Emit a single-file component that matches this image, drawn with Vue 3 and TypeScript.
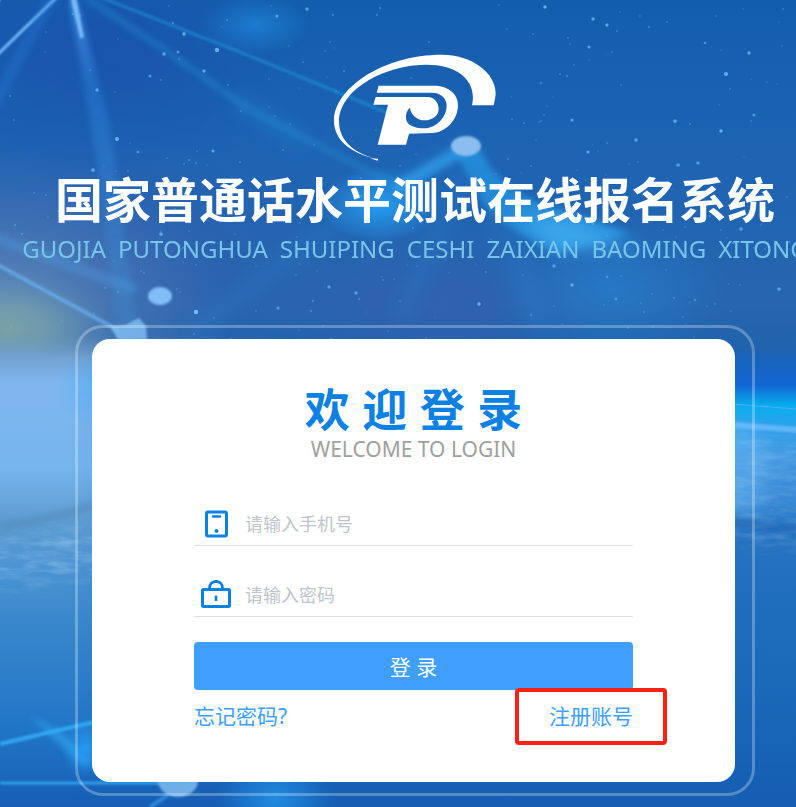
<script setup lang="ts">
import { ref } from 'vue'

interface Star {
  x: number
  y: number
  r: number
  o: number
}

const phone = ref('')
const password = ref('')

const pinyin: string[] = ['GUOJIA', 'PUTONGHUA', 'SHUIPING', 'CESHI', 'ZAIXIAN', 'BAOMING', 'XITONG']

const brightStars: Star[] = [
  [97, 90, 2, 0.7], [117, 139, 2.4, 0.8], [93, 170, 2.2, 0.7], [184, 34, 2, 0.8], [217, 50, 2.6, 0.8],
  [164, 54, 2, 0.7], [178, 52, 1.8, 0.6], [204, 71, 2, 0.7], [150, 76, 1.8, 0.6], [213, 151, 1.8, 0.7],
  [138, 152, 1.6, 0.6], [161, 234, 2.2, 0.7], [196, 312, 2.6, 0.9], [329, 287, 2, 0.6], [356, 293, 2, 0.6],
  [278, 308, 1.8, 0.6], [307, 9, 2, 0.7], [277, 16, 1.8, 0.7], [545, 7, 2, 0.8], [593, 19, 2, 0.7],
  [607, 25, 2, 0.7], [589, 47, 1.8, 0.7], [705, 43, 1.6, 0.5], [749, 53, 2, 0.7], [726, 74, 2.4, 0.8],
  [675, 121, 2.2, 0.7], [721, 131, 2, 0.8], [636, 140, 2, 0.7], [588, 152, 1.8, 0.7], [678, 165, 2.2, 0.6],
  [698, 163, 2, 0.6], [572, 120, 1.8, 0.7], [754, 115, 1.8, 0.6], [741, 229, 2.2, 0.6], [779, 289, 2, 0.7],
  [554, 266, 2, 0.6], [572, 285, 2, 0.7], [479, 304, 2, 0.8], [616, 299, 1.8, 0.5], [607, 277, 1.6, 0.5],
].map(([x, y, r, o]) => ({ x, y, r: r * 0.85, o }))

function scatter(count: number): Star[] {
  let seed = 4217
  const next = (): number => {
    seed = (seed * 16807) % 2147483647
    return seed / 2147483647
  }
  return Array.from({ length: count }, () => ({
    x: Math.round(next() * 796),
    y: Math.round(next() * 345),
    r: 0.7 + next() * 0.6,
    o: 0.15 + next() * 0.25,
  }))
}

const stars: Star[] = [...scatter(240), ...brightStars]
</script>

<template>
  <main class="page">
    <svg class="sky" viewBox="0 0 796 807" preserveAspectRatio="xMidYMid slice" aria-hidden="true">
      <defs>
        <linearGradient id="base" x1="0" y1="0" x2="0" y2="1">
          <stop offset="0" stop-color="#125ead" />
          <stop offset="0.2" stop-color="#1e64b3" />
          <stop offset="0.38" stop-color="#2765ae" />
          <stop offset="0.44" stop-color="#1f62ad" />
          <stop offset="0.6" stop-color="#2a78c6" />
          <stop offset="0.8" stop-color="#1c6cbb" />
          <stop offset="1" stop-color="#155eb3" />
        </linearGradient>
        <linearGradient id="ocean" x1="0" y1="0" x2="0" y2="1">
          <stop offset="0" stop-color="#6f9dc0" stop-opacity="0" />
          <stop offset="0.05" stop-color="#73a3d2" />
          <stop offset="0.1" stop-color="#7fb6f0" />
          <stop offset="0.28" stop-color="#76b5ee" />
          <stop offset="0.39" stop-color="#5f9dd2" />
          <stop offset="0.5" stop-color="#4a93d2" />
          <stop offset="0.6" stop-color="#3a88cb" />
          <stop offset="0.82" stop-color="#2277c8" />
          <stop offset="1" stop-color="#165eb5" />
        </linearGradient>
        <linearGradient id="oceanFade" x1="0" y1="0" x2="1" y2="0">
          <stop offset="0.22" stop-color="#fff" />
          <stop offset="1" stop-color="#000" />
        </linearGradient>
        <mask id="oceanMask">
          <rect y="325" width="320" height="482" fill="url(#oceanFade)" />
        </mask>
        <linearGradient id="horizon" x1="0" y1="0" x2="0" y2="1">
          <stop offset="0" stop-color="#0a64d4" stop-opacity="0" />
          <stop offset="0.13" stop-color="#1266d2" />
          <stop offset="0.2" stop-color="#07aeee" />
          <stop offset="0.27" stop-color="#2fa0ea" />
          <stop offset="0.38" stop-color="#4296e0" />
          <stop offset="0.52" stop-color="#3585d2" />
          <stop offset="0.64" stop-color="#2673c0" />
          <stop offset="1" stop-color="#1967b6" stop-opacity="0" />
        </linearGradient>
        <radialGradient id="glow">
          <stop offset="0" stop-color="#27a9ff" />
          <stop offset="1" stop-color="#27a9ff" stop-opacity="0" />
        </radialGradient>
        <radialGradient id="violet">
          <stop offset="0" stop-color="#3c5eae" stop-opacity="0.8" />
          <stop offset="1" stop-color="#3c5eae" stop-opacity="0" />
        </radialGradient>
        <radialGradient id="indigo">
          <stop offset="0" stop-color="#1b50ad" stop-opacity="0.75" />
          <stop offset="1" stop-color="#1b50ad" stop-opacity="0" />
        </radialGradient>
        <radialGradient id="haze">
          <stop offset="0" stop-color="#6f96b8" stop-opacity="0.85" />
          <stop offset="1" stop-color="#4f80b8" stop-opacity="0" />
        </radialGradient>
        <radialGradient id="dawn">
          <stop offset="0" stop-color="#7aa2a6" stop-opacity="0.95" />
          <stop offset="0.4" stop-color="#769fac" stop-opacity="0.75" />
          <stop offset="1" stop-color="#5c8cb8" stop-opacity="0" />
        </radialGradient>
        <linearGradient id="ray" x1="0" y1="0" x2="0" y2="1">
          <stop offset="0" stop-color="#4c9ff0" />
          <stop offset="0.25" stop-color="#2b80da" stop-opacity="0.7" />
          <stop offset="1" stop-color="#419be0" stop-opacity="0.3" />
        </linearGradient>
        <filter id="soft1" filterUnits="userSpaceOnUse" x="-20" y="-20" width="836" height="847"><feGaussianBlur stdDeviation="1" /></filter>
        <filter id="soft3" filterUnits="userSpaceOnUse" x="-20" y="-20" width="836" height="847"><feGaussianBlur stdDeviation="3" /></filter>
        <filter id="soft9" filterUnits="userSpaceOnUse" x="-40" y="-40" width="876" height="887"><feGaussianBlur stdDeviation="9" /></filter>
        <filter id="ripple" filterUnits="userSpaceOnUse" x="0" y="380" width="796" height="240">
          <feTurbulence type="fractalNoise" baseFrequency="0.04 0.15" numOctaves="3" seed="8" />
          <feColorMatrix values="0 0 0 0 0.5  0 0 0 0 0.75  0 0 0 0 1  2 0 0 0 -0.75" result="waves" />
          <feGaussianBlur in="SourceGraphic" stdDeviation="7" result="area" />
          <feComposite in="waves" in2="area" operator="in" />
        </filter>
      </defs>

      <rect width="796" height="807" fill="url(#base)" />
      <ellipse cx="100" cy="50" rx="210" ry="130" fill="url(#indigo)" />
      <ellipse cx="80" cy="260" rx="260" ry="130" fill="url(#violet)" opacity="0.7" />
      <ellipse cx="0" cy="320" rx="230" ry="170" fill="url(#haze)" />
      <ellipse cx="430" cy="305" rx="170" ry="80" fill="url(#violet)" opacity="0.6" />
      <ellipse cx="255" cy="25" rx="55" ry="30" fill="url(#glow)" opacity="0.4" />
      <ellipse cx="380" cy="205" rx="60" ry="38" fill="url(#glow)" opacity="0.85" />
      <ellipse cx="610" cy="290" rx="120" ry="70" fill="url(#glow)" opacity="0.28" />
      <ellipse cx="8" cy="330" rx="105" ry="60" fill="url(#dawn)" />
      <rect y="335" width="320" height="472" fill="url(#ocean)" mask="url(#oceanMask)" />
      <ellipse cx="95" cy="388" rx="40" ry="40" fill="url(#glow)" opacity="0.3" />
      <path d="M640 345 L796 355 V650 H640Z" fill="url(#horizon)" />
      <ellipse cx="735" cy="470" rx="34" ry="48" fill="#6bb9f2" opacity="0.45" filter="url(#soft9)" />

      <g filter="url(#ripple)" opacity="0.32">
        <path d="M-20 545 Q50 525 120 515 V572 L-20 595Z" fill="#fff" />
        <path d="M700 430 L816 440 V555 L700 540Z" fill="#fff" opacity="0.7" />
      </g>
      <path d="M0 527 Q50 520 95 505" stroke="#4d86b4" stroke-width="9" fill="none" opacity="0.45" filter="url(#soft3)" />
      <path d="M720 520 L796 530" stroke="#1c62ae" stroke-width="10" opacity="0.5" filter="url(#soft3)" />
      <path d="M720 403 L796 409" stroke="#6bb0e8" stroke-width="1" opacity="0.7" />
      <path d="M720 424 L800 430" stroke="#7bc2ff" stroke-width="6" opacity="0.65" filter="url(#soft1)" />

      <g fill="none" stroke-linecap="round">
        <path d="M58 -4 L-4 56" stroke="#77bdff" stroke-width="3" filter="url(#soft1)" />
        <path d="M50 0 L-4 100" stroke="#2b80df" stroke-width="12" opacity="0.3" filter="url(#soft3)" />
        <path d="M100 -3 L250 56 L400 118" stroke="#249ce0" stroke-width="3" opacity="0.5" filter="url(#soft1)" />
        <path d="M85 -3 L165 50 L250 110 L405 190" stroke="#2790d2" stroke-width="5" opacity="0.5" filter="url(#soft3)" />
        <path d="M240 100 L300 140" stroke="#2790d2" stroke-width="16" opacity="0.3" filter="url(#soft9)" />
        <path d="M-4 264 L118 330" stroke="#66b3f5" stroke-width="4" opacity="0.7" filter="url(#soft1)" />
        <path d="M-4 238 L132 288" stroke="#519be0" stroke-width="10" opacity="0.4" filter="url(#soft3)" />
        <path d="M460 148 L395 185 L300 250 L195 330" stroke="#268bd9" stroke-width="14" opacity="0.25" filter="url(#soft9)" />
        <path d="M462 150 L399 187" stroke="#31a6f2" stroke-width="13" opacity="0.65" filter="url(#soft3)" />
      </g>
      <path d="M69 0 H77 L111 130 L137 330 H118 L96 155Z" fill="url(#ray)" opacity="0.7" filter="url(#soft3)" />
      <path d="M70 -4 H76 L84 38 L80 38Z" fill="#8acaff" opacity="0.8" filter="url(#soft1)" />
      <path d="M455 152 Q465 140 482 151 Q494 184 540 203 L630 233 L560 254 Q510 232 485 205Z" fill="#28a2ee" opacity="0.6" filter="url(#soft3)" />
      <path d="M515 218 L565 217 L640 247 L555 249Z" fill="#48b9fa" opacity="0.65" filter="url(#soft9)" />
      <path d="M466 165 L400 320 M490 195 L540 325" stroke="#278ee0" stroke-width="18" opacity="0.2" filter="url(#soft9)" />

      <circle v-for="(star, index) in stars" :key="index" :cx="star.x" :cy="star.y" :r="star.r" :opacity="star.o" fill="#72c4ff" />

      <ellipse cx="466" cy="146" rx="15" ry="10" fill="#8bbdf0" filter="url(#soft1)" />
      <ellipse cx="160" cy="296" rx="12" ry="9" fill="#83bdf7" filter="url(#soft1)" />
      <path d="M110 326 L125 325 L139 318 L146 326 L147 340 H118Z" fill="#7fbbf2" opacity="0.85" filter="url(#soft1)" />
      <path d="M0 744 L55 731 L95 722" stroke="#31a6f2" stroke-width="4" fill="none" filter="url(#soft1)" />
      <path d="M30 716 L60 731 L95 765 H82Z" fill="#34b4fb" opacity="0.5" filter="url(#soft3)" />
      <ellipse cx="86" cy="748" rx="26" ry="30" fill="url(#glow)" opacity="0.7" />
      <path d="M0 783 H170" stroke="#36b4fb" stroke-width="3" opacity="0.75" filter="url(#soft1)" />
      <path d="M150 807 L168 795" stroke="#36a4f0" stroke-width="4" opacity="0.6" filter="url(#soft1)" />
      <ellipse cx="275" cy="800" rx="58" ry="45" fill="url(#glow)" opacity="0.6" />
      <ellipse cx="178" cy="781" rx="20" ry="16" fill="#70aee8" filter="url(#soft1)" />
    </svg>

    <header class="brand">
      <svg class="logo" viewBox="39 42 492 321" role="img" aria-label="国家普通话水平测试">
        <path fill="#fff" d="M175 357C102 343 42 306 42 242C42 145 190 44 365 44C465 44 540 110 525 176L521 196H456C473 120 410 72 315 74C190 76 57 150 57 246C57 305 110 345 175 357L172 362L150 354Z" />
        <path fill="#fff" d="M176 137H350C389 140 414 165 414 195C414 240 375 279 335 279L267 281L258 314H173L204 194H160L167 171H325C345 173 356 190 356 207C356 228 336 241 314 241C292 241 272 225 270 203C256 215 255 235 262 247C270 260 290 265 310 265C350 265 380 230 380 197C380 172 360 158 335 158H170Z" />
      </svg>
      <h1 class="title">国家普通话水平测试在线报名系统</h1>
      <p class="pinyin">
        <span v-for="word in pinyin" :key="word">{{ word }}</span>
      </p>
    </header>

    <section class="frame">
      <form class="card" @submit.prevent>
        <h2 class="welcome">欢 迎 登 录</h2>
        <p class="welcome-en">WELCOME TO LOGIN</p>

        <div class="fields">
          <div class="field">
            <label class="icon" for="phone" aria-label="手机号">
              <svg width="30" height="30" viewBox="0 0 30 30" fill="none" stroke="#0d80e4">
                <rect x="5.500" y="3" width="20" height="24" rx="1.500" stroke-width="3" />
                <path d="M12 7.500H19" stroke-width="2.400" stroke-linecap="round" />
                <circle cx="15.500" cy="22" r="2" fill="#0d80e4" stroke="none" />
              </svg>
            </label>
            <input id="phone" v-model="phone" type="tel" placeholder="请输入手机号" />
          </div>
          <div class="field">
            <label class="icon" for="password" aria-label="密码">
              <svg width="30" height="30" viewBox="0 0 30 30" fill="none" stroke="#0d80e4">
                <rect x="1.500" y="9.500" width="27" height="17" rx="1" stroke-width="3" />
                <path d="M8.500 9V8C8.500 4 11.300 1.500 15 1.500S21.500 4 21.500 8V9" stroke-width="2.800" />
                <path d="M15 15.500V21" stroke-width="2.600" />
              </svg>
            </label>
            <input id="password" v-model="password" type="password" placeholder="请输入密码" />
          </div>
        </div>

        <button class="submit" type="submit">登 录</button>

        <nav class="links">
          <a href="#forgot">忘记密码?</a>
          <a href="#register" class="register">注册账号</a>
        </nav>
      </form>
    </section>
  </main>
</template>

<style>
body {
  margin: 0;
}
</style>

<style scoped>
.page {
  position: relative;
  box-sizing: border-box;
  display: flex;
  flex-direction: column;
  align-items: center;
  min-height: 100vh;
  padding: 54px 0 10px 34px;
  overflow: hidden;
  background: #1a64b4;
  font-family: "Noto Sans", "Noto Sans CJK SC", sans-serif;
}

.sky {
  position: absolute;
  inset: 0;
  width: 100%;
  height: 100%;
}

.brand {
  position: relative;
  display: flex;
  flex-direction: column;
  align-items: center;
}

.logo {
  width: 164px;
  height: 107px;
}

.title {
  margin: 15px 0 0;
  color: #fff;
  font-size: 48px;
  font-weight: 700;
  line-height: 48px;
  white-space: nowrap;
}

.pinyin {
  display: flex;
  gap: 12px;
  margin: 10px 0 0;
  color: #78c5eb;
  font-size: 24px;
  line-height: 30px;
  white-space: nowrap;
}

.frame {
  position: relative;
  box-sizing: border-box;
  width: 100%;
  max-width: 680px;
  margin-top: 61px;
  padding: 11px 17px 11px 14px;
  border: 3px solid rgba(255, 255, 255, 0.28);
  border-radius: 28px;
}

.card {
  padding: 47px 102px 51px;
  border-radius: 18px;
  background: #fff;
}

.welcome {
  margin: 0;
  color: #0d80e4;
  font-family: "Liberation Sans", "Noto Sans CJK SC", sans-serif;
  font-size: 45px;
  font-weight: 700;
  line-height: 51px;
  text-align: center;
}

.welcome-en {
  margin: 0;
  color: #a0a0a0;
  font-size: 21px;
  line-height: 24px;
  text-align: center;
}

.fields {
  display: grid;
  gap: 25px;
  margin-top: 39px;
}

.field {
  display: flex;
  align-items: center;
  gap: 14px;
  height: 43px;
  padding: 2px 0 0 7px;
  border-bottom: 1px solid #dcdfe6;
}

.icon {
  display: flex;
}

.field input {
  flex: 1;
  min-width: 0;
  height: 40px;
  padding: 0;
  border: 0;
  outline: 0;
  background: transparent;
  color: #606266;
  font: inherit;
  font-size: 18px;
}

.field input::placeholder {
  color: #c0c4cc;
  opacity: 1;
}

.submit {
  display: block;
  width: 100%;
  height: 48px;
  margin-top: 25px;
  padding: 0;
  border: 0;
  border-radius: 4px;
  background: #409eff;
  color: #fff;
  font: inherit;
  font-size: 21px;
  cursor: pointer;
}

.links {
  display: flex;
  justify-content: space-between;
  margin-top: 11px;
  font-size: 21px;
  line-height: 30px;
}

.links a {
  color: #409eff;
  text-decoration: none;
}

.register {
  position: relative;
}

.register::after {
  content: "";
  position: absolute;
  inset: -13px -34px -14px;
  border: 4px solid #ff2015;
  border-radius: 4px;
}
</style>
